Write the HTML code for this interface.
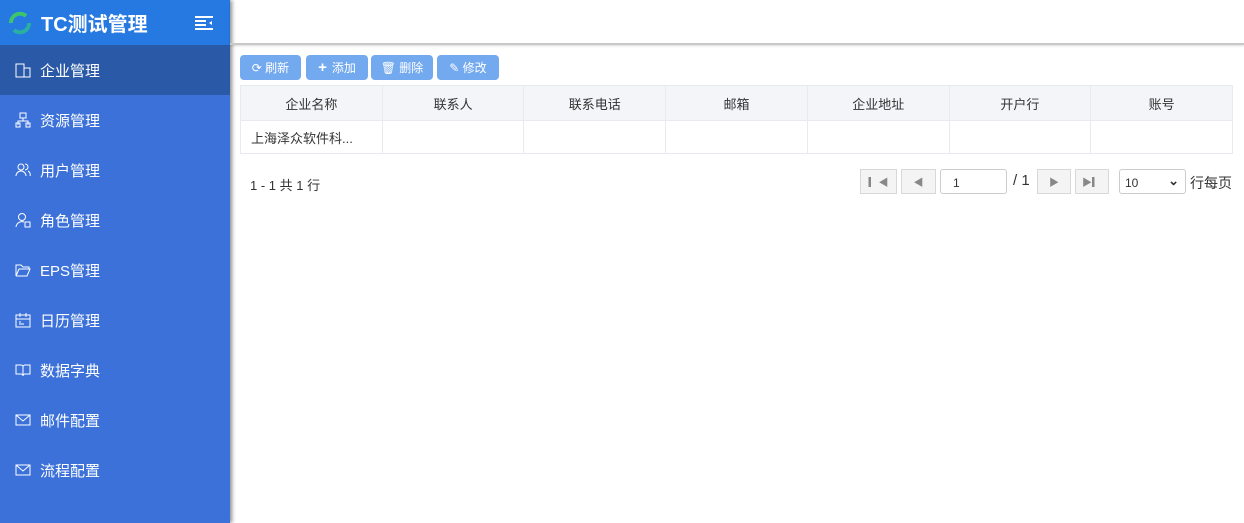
<!DOCTYPE html>
<html><head><meta charset="utf-8"><style>
*{box-sizing:border-box;margin:0;padding:0}
body{width:1244px;height:523px;overflow:hidden;background:#fff;font-family:"Liberation Sans","Noto Sans CJK SC",sans-serif;position:relative}
.side{position:absolute;left:0;top:0;width:230px;height:523px;background:#3b71d8;box-shadow:2px 0 4px rgba(0,0,0,.45)}
.logo{height:45px;background:#2679e1;display:flex;align-items:center;color:#fff;font-size:20px;font-weight:bold;padding-left:7px}
.logo span{margin-left:8px}
.menu{height:50px;display:flex;align-items:center;color:#fff;font-size:15px;padding-left:15px}
.menu.act{background:#2a5aa7}
.menu svg{margin-right:9px}
.top{position:absolute;left:230px;top:0;right:0;height:45px;border-bottom:2px solid #c8c8c8;box-shadow:0 1px 2px rgba(0,0,0,.15)}
.btn{position:absolute;top:55px;height:25px;background:#73a9ef;color:#fff;font-size:12px;border-radius:4px;display:flex;align-items:center;justify-content:center;gap:5px}
table{position:absolute;left:240px;top:85px;width:993px;border-collapse:collapse;font-size:13px;color:#333}
td,th{border:1px solid #e8eaef;font-weight:normal;width:142px}
th{background:#f4f5f8;height:35px}
td{height:33px;padding-left:10px}
.pb{position:absolute;top:169px;height:25px;border:1px solid #d8d8d8;background:#f4f4f4;font-size:10px;color:#888;display:flex;align-items:center;justify-content:center}
</style></head><body>
<div class="side">
<div class="logo"><svg width="26" height="26" viewBox="0 0 26 26"><path d="M4 13a9 9 0 0 1 15-7" stroke="#3ec46d" stroke-width="4" fill="none"/><path d="M22 13a9 9 0 0 1-15 7" stroke="#2ab0a0" stroke-width="4" fill="none"/></svg><span>TC测试管理</span>
<svg style="margin-left:47px" width="18" height="16" viewBox="0 0 18 16"><path d="M0 2h18M0 6h11M0 10h11M0 14h18" stroke="#fff" stroke-width="2"/><path d="M17 6v4l-3-2z" fill="#fff"/></svg></div>
<div class="menu act"><svg width="16" height="16"><rect x="1" y="2" width="8" height="13" stroke="#fff" fill="none"/><rect x="9" y="6" width="6" height="9" stroke="#fff" fill="none"/></svg>企业管理</div>
<div class="menu"><svg width="16" height="16"><rect x="5" y="1" width="6" height="5" stroke="#fff" fill="none"/><path d="M3 13V9h10v4M8 6v3" stroke="#fff" fill="none"/><rect x="1" y="11" width="4" height="4" stroke="#fff" fill="none"/><rect x="11" y="11" width="4" height="4" stroke="#fff" fill="none"/></svg>资源管理</div>
<div class="menu"><svg width="16" height="16"><circle cx="6" cy="5" r="3" stroke="#fff" fill="none"/><path d="M1 14a5 5 0 0 1 10 0M10 2a3 3 0 0 1 0 6M13 9a4 4 0 0 1 2 5" stroke="#fff" fill="none"/></svg>用户管理</div>
<div class="menu"><svg width="16" height="16"><circle cx="7" cy="5" r="3.5" stroke="#fff" fill="none"/><path d="M1 15a6 6 0 0 1 8-5" stroke="#fff" fill="none"/><rect x="10" y="10" width="5" height="5" stroke="#fff" fill="none"/></svg>角色管理</div>
<div class="menu"><svg width="16" height="16"><path d="M1 3h5l2 2h6v2H4l-3 7zM4 7h11l-3 7H1" stroke="#fff" fill="none"/></svg>EPS管理</div>
<div class="menu"><svg width="16" height="16"><rect x="1" y="3" width="14" height="12" stroke="#fff" fill="none"/><path d="M1 7h14M5 1v4M11 1v4M4 10h2M4 12h5" stroke="#fff"/></svg>日历管理</div>
<div class="menu"><svg width="16" height="16"><path d="M1 3h5a2 2 0 0 1 2 2v9a2 2 0 0 0-2-2H1zM15 3h-5a2 2 0 0 0-2 2v9a2 2 0 0 1 2-2h5z" stroke="#fff" fill="none"/></svg>数据字典</div>
<div class="menu"><svg width="16" height="16"><rect x="1" y="3" width="14" height="10" stroke="#fff" fill="none"/><path d="M1 3l7 6 7-6" stroke="#fff" fill="none"/></svg>邮件配置</div>
<div class="menu"><svg width="16" height="16"><rect x="1" y="3" width="14" height="10" stroke="#fff" fill="none"/><path d="M1 3l7 6 7-6" stroke="#fff" fill="none"/></svg>流程配置</div>
</div>
<div class="top"></div>
<div class="btn" style="left:240px;width:61px">⟳ 刷新</div>
<div class="btn" style="left:306px;width:62px"><b style="font-size:15px">+</b> 添加</div>
<div class="btn" style="left:371px;width:62px">🗑 删除</div>
<div class="btn" style="left:437px;width:62px">✎ 修改</div>
<table><tr><th>企业名称</th><th>联系人</th><th>联系电话</th><th>邮箱</th><th>企业地址</th><th>开户行</th><th>账号</th></tr>
<tr><td>上海泽众软件科...</td><td></td><td></td><td></td><td></td><td></td><td></td></tr></table>
<div style="position:absolute;left:250px;top:175px;font-size:13px;color:#333">1 - 1 共 1 行</div>
<div class="pb" style="left:860px;width:37px">▎◀</div>
<div class="pb" style="left:901px;width:35px">◀</div>
<div style="position:absolute;left:940px;top:169px;width:67px;height:25px;border:1px solid #ccc;border-radius:3px;font-size:12px;padding:6px 0 0 12px;color:#333">1</div>
<div style="position:absolute;left:1013px;top:172px;font-size:15px;color:#333">/ 1</div>
<div class="pb" style="left:1037px;width:34px">▶</div>
<div class="pb" style="left:1075px;width:34px">▶▎</div>
<div style="position:absolute;left:1119px;top:169px;width:67px;height:25px;border:1px solid #ccc;border-radius:3px;font-size:12px;padding:6px 0 0 5px;color:#333">10<span style="position:absolute;right:6px;top:3px;font-size:13px;font-weight:bold">⌄</span></div>
<div style="position:absolute;left:1190px;top:173px;font-size:14px;color:#333">行每页</div>
</body></html>
